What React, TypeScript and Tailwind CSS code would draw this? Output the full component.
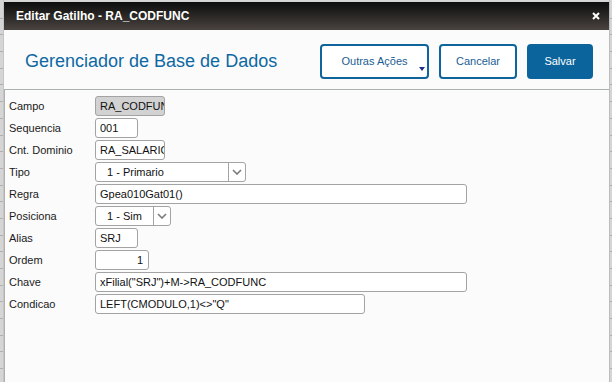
import React from 'react';

const font = { fontFamily: '"Liberation Sans", Arial, sans-serif' };

function Strip({ side }: { side: 'left' | 'right' }) {
  const rows = Array.from({ length: 24 });
  return (
    <div
      className={`flex h-full flex-col bg-[#d5d5d5] ${
        side === 'left' ? 'w-[4px] border-r border-[#c4c4c4]' : 'w-[3px] border-l border-[#bdbdbd]'
      }`}
    >
      <div className="h-[2px] shrink-0" />
      {rows.map((_, i) => (
        <div key={i} className="h-[16.7px] shrink-0 border-b border-[#b0b0b0]" />
      ))}
    </div>
  );
}

function Chevron() {
  return (
    <svg width="10" height="6" viewBox="0 0 10 6">
      <polyline points="1,1 5,5 9,1" fill="none" stroke="#7a7a7a" strokeWidth="1.6" />
    </svg>
  );
}

function TextField({
  value,
  width,
  disabled,
  right,
}: {
  value: string;
  width: string;
  disabled?: boolean;
  right?: boolean;
}) {
  return (
    <div
      className={`flex h-[20px] items-center overflow-hidden whitespace-nowrap rounded-[3px] border border-[#a3a3a3] text-[11px] text-[#111] ${width} ${
        disabled ? 'bg-[#d2d2d2] pl-[4px]' : 'bg-white pl-[4px]'
      } ${right ? 'justify-end pr-[5px]' : ''}`}
    >
      {value}
    </div>
  );
}

function SelectField({ value, width }: { value: string; width: string }) {
  return (
    <div
      className={`flex h-[20px] items-stretch overflow-hidden rounded-[3px] border border-[#a3a3a3] bg-white text-[11px] text-[#111] ${width}`}
    >
      <div className="flex flex-1 items-center pl-[11px]">{value}</div>
      <div className="flex w-[17px] items-center justify-center border-l border-[#a3a3a3]">
        <Chevron />
      </div>
    </div>
  );
}

const rows: { label: string; field: React.ReactNode }[] = [
  { label: 'Campo', field: <TextField value="RA_CODFUNC" width="w-[70px]" disabled /> },
  { label: 'Sequencia', field: <TextField value="001" width="w-[43px]" /> },
  { label: 'Cnt. Dominio', field: <TextField value="RA_SALARIO" width="w-[70px]" /> },
  { label: 'Tipo', field: <SelectField value="1 - Primario" width="w-[151px]" /> },
  { label: 'Regra', field: <TextField value="Gpea010Gat01()" width="w-[372px]" /> },
  { label: 'Posiciona', field: <SelectField value="1 - Sim" width="w-[76px]" /> },
  { label: 'Alias', field: <TextField value="SRJ" width="w-[43px]" /> },
  { label: 'Ordem', field: <TextField value="1" width="w-[54px]" right /> },
  { label: 'Chave', field: <TextField value={'xFilial("SRJ")+M->RA_CODFUNC'} width="w-[372px]" /> },
  { label: 'Condicao', field: <TextField value={'LEFT(CMODULO,1)<>"Q"'} width="w-[270px]" /> },
];

export default function App() {
  return (
    <div className="flex h-[382px] w-[612px] overflow-hidden bg-[#d5d5d5]" style={font}>
      <Strip side="left" />

      <div className="mt-[2px] flex flex-1 flex-col bg-[#fbfbfb]">
        {/* Title bar */}
        <div className="flex h-[28px] shrink-0 items-center justify-between bg-linear-to-b from-[#0e0e0e] to-[#4a4440] pl-[12px] pr-[9px]">
          <span className="text-[12px] font-bold text-white">Editar Gatilho - RA_CODFUNC</span>
          <svg width="8" height="8" viewBox="0 0 8 8">
            <path d="M1 1 L7 7 M7 1 L1 7" stroke="#fff" strokeWidth="2" />
          </svg>
        </div>

        {/* Header */}
        <div className="flex h-[60px] shrink-0 items-start justify-between border-b border-[#a9b0b0] pl-[21px] pr-[16px] pt-[14px]">
          <h1 className="mt-[3px] text-[18px] leading-[28px] text-[#0d68a3]">Gerenciador de Base de Dados</h1>
          <div className="flex gap-[10px]">
            <button className="relative h-[35px] w-[109px] rounded-[4px] border-2 border-[#0f659b] bg-white text-[11px] text-[#1b5d93]">
              Outras Ações
              <span className="absolute bottom-[6px] right-[2px] h-0 w-0 border-x-[3.5px] border-t-[4px] border-x-transparent border-t-[#1c2f8c]" />
            </button>
            <button className="h-[35px] w-[78px] rounded-[4px] border-2 border-[#0f659b] bg-white text-[11px] text-[#1b5d93]">
              Cancelar
            </button>
            <button className="h-[35px] w-[66px] rounded-[4px] bg-[#0b659c] text-[11px] text-white">Salvar</button>
          </div>
        </div>

        {/* Form */}
        <div className="flex flex-1 flex-col gap-[2px] border-l border-[#b0b0b0] pl-[4px] pt-[6px]">
          {rows.map((r) => (
            <div key={r.label} className="flex h-[20px] items-center">
              <span className="w-[86px] text-[11px] text-[#1a1a1a]">{r.label}</span>
              {r.field}
            </div>
          ))}
        </div>
      </div>

      <Strip side="right" />
    </div>
  );
}
